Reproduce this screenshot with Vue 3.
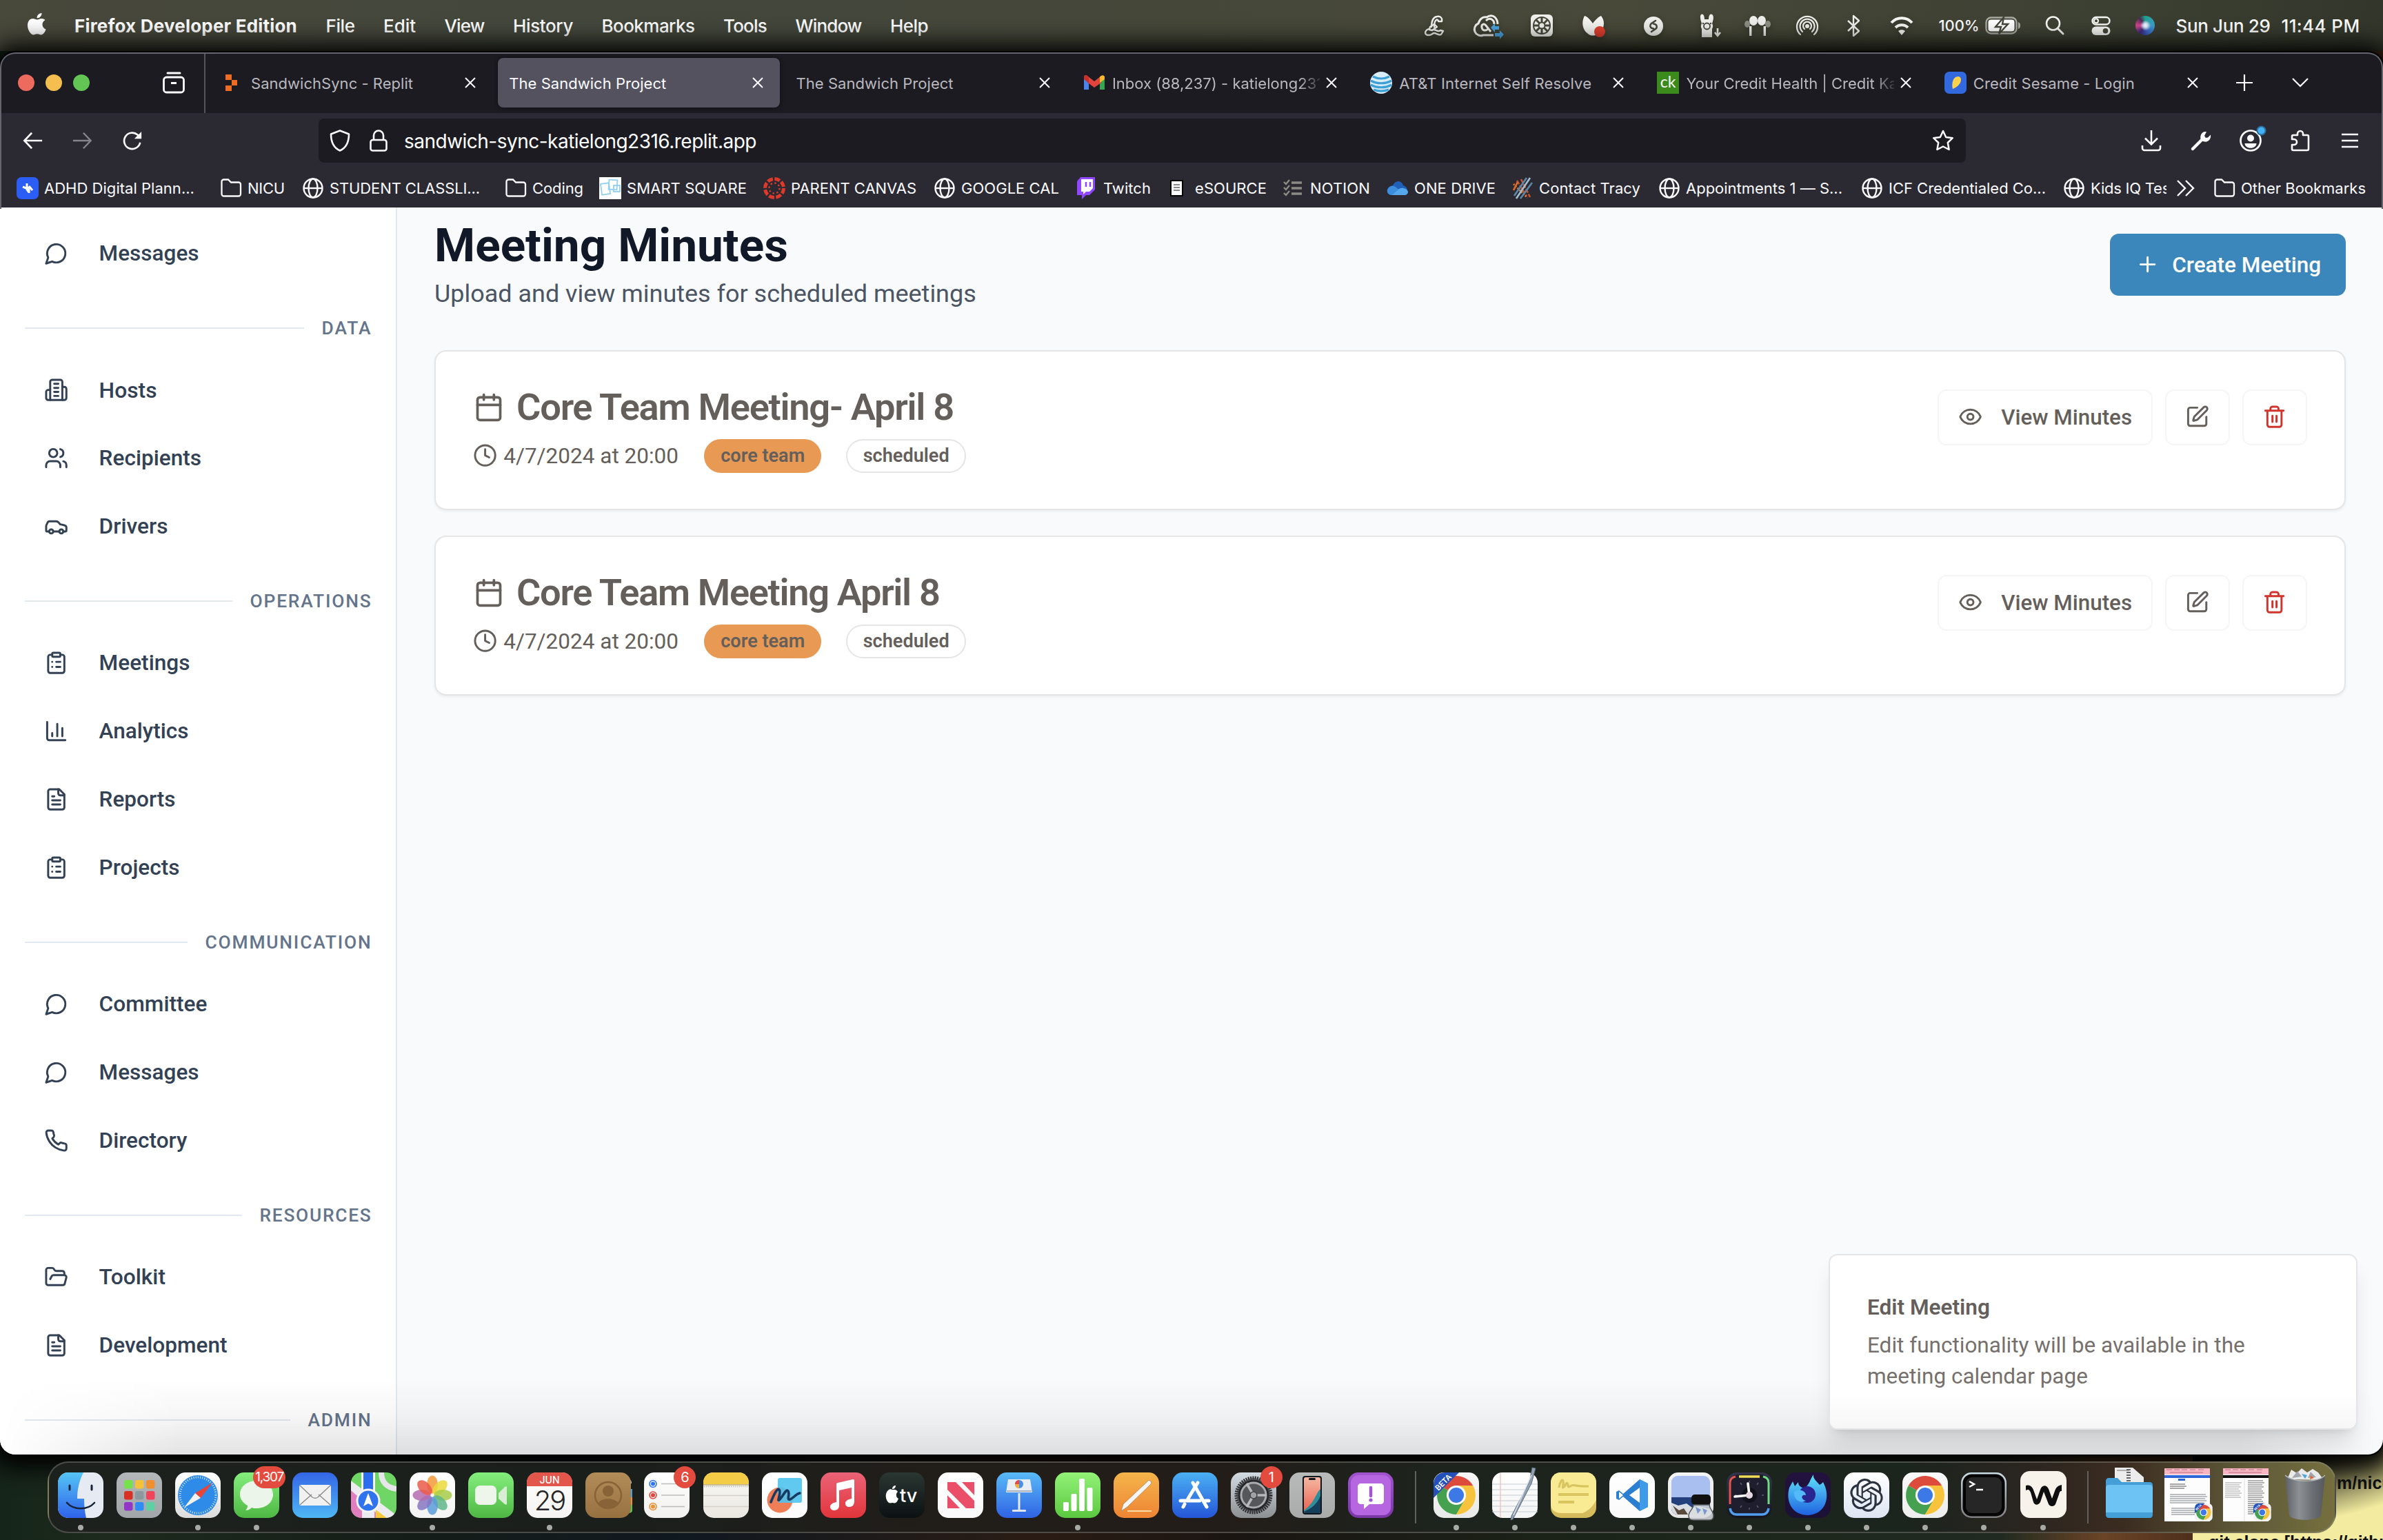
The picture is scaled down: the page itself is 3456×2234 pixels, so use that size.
<script setup>
// Fits a line of text to a known width: letter-spacing by default, font size with v-fit:size
const vFit = {
  mounted(el, binding) {
    const target = binding.value
    if (!target) return
    const range = document.createRange()
    range.selectNodeContents(el)
    const natural = range.getBoundingClientRect().width
    const cs = getComputedStyle(el)
    if (binding.arg === 'size') {
      el.style.fontSize = (parseFloat(cs.fontSize) * target) / natural + 'px'
    } else {
      const n = el.textContent.trim().length
      const base = parseFloat(cs.letterSpacing) || 0
      el.style.letterSpacing = base + (target - natural) / n + 'px'
    }
  },
}

/* ---------- menu bar ---------- */
const menus = [
  { t: 'File', w: 42 }, { t: 'Edit', w: 47 }, { t: 'View', w: 58 }, { t: 'History', w: 87 },
  { t: 'Bookmarks', w: 135 }, { t: 'Tools', w: 63 }, { t: 'Window', w: 96 }, { t: 'Help', w: 55 },
]
const status = [
  { gap: 0, art: '<g fill="none" stroke="#eeeeea" stroke-width="2.4" stroke-linejoin="round" stroke-linecap="round"><path d="M14 20c0-7 2-14 8-15 5-1 8 2 7 7h-5c0-2-2-3-3-2-3 2-3 7-3 10"/><path d="M12 20l6-4 4 4-7 5-4-1zM10 23c-7 3-6 9 0 9 5 0 5-3 8-3s6 4 10 2l3-5-4-1c-4 3-6-1-10-1"/></g>' },
  { gap: 42, art: '<g fill="none" stroke="#eeeeea" stroke-width="3"><path d="M26 32H11A9 9 0 0 1 4 15C6 8 11 5 16 6c4-3 9-3 12 0s4 6 4 10"/><path d="M22 27l-7-9c-3-4-7-1-6 3 1 5 6 5 9 2M15 11c6-6 12-1 12 5"/></g><path d="M22 21l6-6v4h6v5h-6v4zM41 31l-6-6v4h-7v5h7v4z" fill="#4aa3df"/>' },
  { gap: 42, art: '<rect x="2" y="2" width="32" height="32" rx="6" fill="#eeeeea"/><circle cx="18" cy="18" r="12" fill="none" stroke="#46473a" stroke-width="2"/><path d="M18 7v22M7 18h22M10 10l16 16M26 10L10 26" stroke="#46473a" stroke-width="3"/><circle cx="18" cy="18" r="4.5" fill="#eeeeea" stroke="#46473a" stroke-width="2"/>' },
  { gap: 40, art: '<path d="M4 4c4 1 8 5 12 11 4-6 9-10 12-11 4 5 5 11 3 17-6-2-13 4-11 11-3 1-8 1-11-2C1 25-1 13 4 4z" fill="#f3f3f0"/><circle cx="26" cy="27" r="8" fill="#e0402f"/>' },
  { gap: 50, art: '<circle cx="18" cy="19" r="14" fill="#eeeeea"/><path d="M21 11l-6 4c-3 2.500-2 6 1 7l2 .5M15 27l6-4c3-2.500 2-6-1-7l-2-.5" fill="none" stroke="#46473a" stroke-width="2.600" stroke-linecap="round"/>' },
  { gap: 45, art: '<path d="M6 2c3-2 5 2 5 7h6c0-5 2-9 5-7s2 8 0 13c2 3 1 6 0 8v12H7V23c-2-3-1-6 0-8-2-5-3-11-1-13z" fill="#eeeeea"/><circle cx="14.500" cy="19" r="4.500" fill="none" stroke="#46473a" stroke-width="1.800"/><circle cx="9" cy="15" r="1.200" fill="#46473a"/><circle cx="20" cy="15" r="1.200" fill="#46473a"/><path d="M30 22v10M26 28l4 5 4-5" fill="none" stroke="#eeeeea" stroke-width="2.600"/>' },
  { gap: 34, art: '<g fill="#eeeeea"><ellipse cx="12" cy="11" rx="6" ry="7"/><ellipse cx="24" cy="11" rx="6" ry="7"/><rect x="6" y="19" width="3.4" height="14"/><rect x="26.600" y="19" width="3.400" height="14"/></g><ellipse cx="3" cy="16" rx="4" ry="5" fill="#8c8d83"/><ellipse cx="33" cy="16" rx="4" ry="5" fill="#8c8d83"/>' },
  { gap: 36, art: '<g fill="none" stroke="#eeeeea" stroke-width="2.3" stroke-linecap="round"><path d="M8 31a15 15 0 1 1 20 0"/><path d="M11 27a10.500 10.500 0 1 1 14 0"/><path d="M14 23a6 6 0 1 1 8 0"/></g><circle cx="18" cy="19" r="3" fill="#eeeeea"/>' },
  { gap: 31, art: '<path d="M10 11l16 15-8 7V4l8 7-16 15" fill="none" stroke="#eeeeea" stroke-width="2.4" stroke-linejoin="round"/>' },
  { gap: 34, art: '<g fill="none" stroke="#f6f6f3" stroke-width="4"><path d="M3 14c8-9 22-9 30 0"/><path d="M9 21c5-5 13-5 18 0"/></g><path d="M13 26c3-2.500 7-2.500 10 0l-5 6z" fill="#f6f6f3"/>' },
]

/* ---------- tabs ---------- */
const fav = {
  replit: '<path d="M5 4h9v8H5zM14 12h8v8h-8zM5 20h9v8H5z" fill="#ee6c22"/>',
  gmail: '<path d="M1 7v19h7V14z" fill="#4a84ee"/><path d="M31 7v19h-7V14z" fill="#37a452"/><path d="M1 7c1-3 4-2 5-1l10 8 10-8v10L16 23 6 15.500z" fill="#e0443a"/><path d="M24 7.500l2-1.500c2-1.500 5-.5 5 2v3l-7 5z" fill="#f7bb2d"/><path d="M1 7c1-3 4-2 5-1l2 1.500v9L1 11z" fill="#c5302a"/>',
  att: '<circle cx="16" cy="16" r="16" fill="#d9edf8"/><g stroke="#3c9fd6" fill="none" stroke-width="3.200"><path d="M4 7c8 4 16 4 24 0"/><path d="M1 13c9 5 21 5 30 0"/><path d="M1 19c9 5 21 5 30 0"/><path d="M5 26c8 3 14 3 22 0"/></g>',
  ck: '<rect width="32" height="32" fill="#3a8a1c"/><text x="16" y="23" text-anchor="middle" font-family="Lato, sans-serif" font-size="23" fill="#fff">ck</text>',
  sesame: '<rect width="32" height="32" rx="7" fill="#3369de"/><path d="M12 25c-2-7 0-18 8-18 7 1 5 13-8 18z" fill="#fbd24b"/>',
}
const tabs = [
  { t: 'SandwichSync - Replit', w: 235, icon: 'replit' },
  { t: 'The Sandwich Project', w: 228, active: true },
  { t: 'The Sandwich Project', w: 228 },
  { t: 'Inbox (88,237) - katielong2316', w: 319, icon: 'gmail' },
  { t: 'AT&T Internet Self Resolve', w: 279, icon: 'att' },
  { t: 'Your Credit Health | Credit Karma', w: 347, icon: 'ck' },
  { t: 'Credit Sesame - Login', w: 234, icon: 'sesame' },
]

/* ---------- bookmarks ---------- */
const globe = '<g fill="none" stroke="#fbfbfe" stroke-width="2.400"><circle cx="16" cy="16" r="13.500"/><ellipse cx="16" cy="16" rx="6.500" ry="13.500"/><path d="M3 16h26"/></g>'
const folder = '<path d="M2.500 6.500a3 3 0 0 1 3-3H12l4 4h11a3 3 0 0 1 3 3v14a3 3 0 0 1-3 3H5.500a3 3 0 0 1-3-3z" fill="none" stroke="#fbfbfe" stroke-width="2.300"/>'
const marks = [
  { x: 24, t: 'ADHD Digital Plann...', w: 218, art: '<rect width="32" height="32" rx="7" fill="#2c5df5"/><path d="M9 14l5 2 3 5M15 9v5l3 4v5M18 13l5 6" fill="none" stroke="#fff" stroke-width="3"/>' },
  { x: 319, t: 'NICU', w: 54, art: folder },
  { x: 438, t: 'STUDENT CLASSLI...', w: 218, art: globe },
  { x: 732, t: 'Coding', w: 74, art: folder },
  { x: 869, t: 'SMART SQUARE', w: 174, art: '<rect width="32" height="32" fill="#fff"/><g fill="none" stroke="#8fd0f0" stroke-width="1.800"><rect x="3" y="9" width="12" height="16" transform="rotate(-8 9 17)"/><rect x="14" y="4" width="12" height="14" transform="rotate(4 20 11)"/><rect x="21" y="12" width="9" height="9"/></g>' },
  { x: 1107, t: 'PARENT CANVAS', w: 182, art: '<circle cx="16" cy="16" r="13.500" fill="none" stroke="#e0392b" stroke-width="5" stroke-dasharray="8 2.600"/><circle cx="16" cy="16" r="7.500" fill="none" stroke="#e0392b" stroke-width="2.400" stroke-dasharray="2.400 3.500"/>' },
  { x: 1354, t: 'GOOGLE CAL', w: 142, art: globe },
  { x: 1560, t: 'Twitch', w: 69, art: '<path d="M7 0h21v18l-8 8h-5l-6 6v-6H2V6z" fill="#9147ff"/><path d="M8 3h17v13l-5 5h-5l-4 4v-4H8z" fill="#fff"/><path d="M15 7v7M21 7v7" stroke="#9147ff" stroke-width="2.500"/>' },
  { x: 1693, t: 'eSOURCE', w: 104, art: '<rect x="4" y="4" width="19" height="24" fill="#000"/><rect x="6" y="6" width="15" height="20" fill="#fff"/><path d="M9 11h9M9 15h9M9 19h9" stroke="#888" stroke-width="2"/>' },
  { x: 1860, t: 'NOTION', w: 87, art: '<g stroke="#8c8b84" stroke-width="3.600" fill="none"><path d="M13 8h15M13 16h15M13 24h15"/><path d="M2 7l3 3 5-6M2 15l3 3 5-6M2 23l3 3 5-6" stroke-width="2.400"/></g>' },
  { x: 2011, t: 'ONE DRIVE', w: 118, art: '<path d="M9 12c3-8 13-8 15 0 8 2 8 14 0 14H8c-9 0-10-12 1-14z" fill="#2160b8"/><path d="M1 18c4-7 10-6 14-2l14 9c-2 1-4 1-5 1H8c-5 0-8-3-7-8z" fill="#3d8ddd"/><path d="M8 26l10-9c5-3 12 0 13 4 0 3-2 5-6 5z" fill="#55a8ec"/>' },
  { x: 2192, t: 'Contact Tracy', w: 147, art: '<g stroke-width="2.600"><path d="M8 5l14 23M14 3l13 26" stroke="#c8542e" stroke-dasharray="6 2"/><path d="M3 10l20 20" stroke="#e08233" stroke-dasharray="2 2"/><path d="M27 1L7 31" stroke="#a3bfd4"/><path d="M22 1L4 27M30 8L13 31" stroke="#5c87a8"/><path d="M3 19l6-12" stroke="#e06a2e"/></g>' },
  { x: 2405, t: 'Appointments 1 — S...', w: 227, art: globe },
  { x: 2699, t: 'ICF Credentialed Co...', w: 228, art: globe },
  { x: 2992, t: 'Kids IQ Test', w: 122, art: globe },
].map((m, i, all) => ({ ...m, slot: (all[i + 1]?.x ?? 3142) - m.x }))

/* ---------- app icons (24px grid) ---------- */
const I = {
  message: '<path d="M7.900 20A9 9 0 1 0 4 16.100L2 22Z"/>',
  building: '<path d="M6 22V4a2 2 0 0 1 2-2h8a2 2 0 0 1 2 2v18Z"/><path d="M6 12H4a2 2 0 0 0-2 2v6a2 2 0 0 0 2 2h2"/><path d="M18 9h2a2 2 0 0 1 2 2v9a2 2 0 0 1-2 2h-2"/><path d="M10 6h4M10 10h4M10 14h4M10 18h4"/>',
  users: '<path d="M16 21v-2a4 4 0 0 0-4-4H6a4 4 0 0 0-4 4v2"/><circle cx="9" cy="7" r="4"/><path d="M22 21v-2a4 4 0 0 0-3-3.870"/><path d="M16 3.130a4 4 0 0 1 0 7.750"/>',
  car: '<path d="M19 17h2c.6 0 1-.4 1-1v-3c0-.9-.7-1.700-1.500-1.900C18.700 10.600 16 10 16 10s-1.300-1.400-2.200-2.300c-.5-.4-1.100-.7-1.800-.7H5c-.6 0-1.100.4-1.400.9l-1.400 2.900A3.700 3.700 0 0 0 2 12v4c0 .6.4 1 1 1h2"/><circle cx="7" cy="17" r="2"/><path d="M9 17h6"/><circle cx="17" cy="17" r="2"/>',
  clipboard: '<rect x="8" y="2" width="8" height="4" rx="1"/><path d="M16 4h2a2 2 0 0 1 2 2v14a2 2 0 0 1-2 2H6a2 2 0 0 1-2-2V6a2 2 0 0 1 2-2h2"/><path d="M12 11h4M12 16h4M8 11h.01M8 16h.01"/>',
  chart: '<path d="M3 3v16a2 2 0 0 0 2 2h16"/><path d="M18 17V9M13 17V5M8 17v-3"/>',
  file: '<path d="M15 2H6a2 2 0 0 0-2 2v16a2 2 0 0 0 2 2h12a2 2 0 0 0 2-2V7Z"/><path d="M14 2v4a2 2 0 0 0 2 2h4"/><path d="M10 9H8M16 13H8M16 17H8"/>',
  phone: '<path d="M22 16.920v3a2 2 0 0 1-2.180 2 19.790 19.790 0 0 1-8.630-3.070 19.500 19.500 0 0 1-6-6 19.790 19.790 0 0 1-3.070-8.670A2 2 0 0 1 4.110 2h3a2 2 0 0 1 2 1.720 12.840 12.840 0 0 0 .7 2.810 2 2 0 0 1-.45 2.110L8.090 9.910a16 16 0 0 0 6 6l1.270-1.270a2 2 0 0 1 2.110-.45 12.840 12.840 0 0 0 2.810.7A2 2 0 0 1 22 16.920z"/>',
  folderOpen: '<path d="m6 14 1.500-2.900A2 2 0 0 1 9.240 10H20a2 2 0 0 1 1.940 2.500l-1.540 6a2 2 0 0 1-1.950 1.500H4a2 2 0 0 1-2-2V5a2 2 0 0 1 2-2h3.900a2 2 0 0 1 1.690.9l.81 1.200a2 2 0 0 0 1.670.9H18a2 2 0 0 1 2 2v2"/>',
  calendar: '<path d="M8 2v4M16 2v4"/><rect x="3" y="4" width="18" height="18" rx="2"/><path d="M3 10h18"/>',
  clock: '<circle cx="12" cy="12" r="10"/><path d="M12 6v6l4 2"/>',
  eye: '<path d="M2.062 12.348a1 1 0 0 1 0-.696 10.750 10.750 0 0 1 19.876 0 1 1 0 0 1 0 .696 10.750 10.750 0 0 1-19.876 0"/><circle cx="12" cy="12" r="3"/>',
  pen: '<path d="M12 3H5a2 2 0 0 0-2 2v14a2 2 0 0 0 2 2h14a2 2 0 0 0 2-2v-7"/><path d="M18.375 2.625a1 1 0 0 1 3 3l-9.013 9.014a2 2 0 0 1-.853.505l-2.873.84a.5.5 0 0 1-.62-.62l.84-2.873a2 2 0 0 1 .506-.852z"/>',
  trash: '<path d="M3 6h18M19 6v14c0 1-1 2-2 2H7c-1 0-2-1-2-2V6M8 6V4c0-1 1-2 2-2h4c1 0 2 1 2 2v2M10 11v6M14 11v6"/>',
  plus: '<path d="M5 12h14M12 5v14"/>',
}

const sections = [
  { items: [{ t: 'Messages', w: 145, icon: 'message' }] },
  { title: 'DATA', w: 73, items: [{ t: 'Hosts', w: 84, icon: 'building' }, { t: 'Recipients', w: 148.5, icon: 'users' }, { t: 'Drivers', w: 100, icon: 'car' }] },
  { title: 'OPERATIONS', w: 177, items: [{ t: 'Meetings', w: 132, icon: 'clipboard' }, { t: 'Analytics', w: 130, icon: 'chart' }, { t: 'Reports', w: 111, icon: 'file' }, { t: 'Projects', w: 117, icon: 'clipboard' }] },
  { title: 'COMMUNICATION', w: 242, items: [{ t: 'Committee', w: 157, icon: 'message' }, { t: 'Messages', w: 145, icon: 'message' }, { t: 'Directory', w: 128, icon: 'phone' }] },
  { title: 'RESOURCES', w: 163, items: [{ t: 'Toolkit', w: 96.5, icon: 'folderOpen' }, { t: 'Development', w: 186, icon: 'file' }] },
  { title: 'ADMIN', w: 93, items: [] },
]

const meetings = [
  { t: 'Core Team Meeting- April 8', w: 633 },
  { t: 'Core Team Meeting April 8', w: 613 },
]

/* ---------- dock ---------- */
const lg = (id, a, b) => `<linearGradient id="${id}" x1="0" y1="0" x2="0" y2="1"><stop offset="0" stop-color="${a}"/><stop offset="1" stop-color="${b}"/></linearGradient>`
const tile = (id, a, b) => `<defs>${lg('t-' + id, a, b)}</defs><rect width="66" height="66" rx="15" fill="url(#t-${id})"/>`
const chrome = (s = '') => `<g ${s}><circle cx="33" cy="33" r="28" fill="#fff"/><path d="M33 33L8.800 19A28 28 0 0 1 57.200 19z" fill="#dc4b3c"/><path d="M8.800 19A28 28 0 0 0 33 61L45.500 40z" fill="#45a04f"/><path d="M57.200 19A28 28 0 0 1 33 61L45 40V19z" fill="#f8c33c"/><path d="M33 19h24.200L45 40z" fill="#f8c33c"/><circle cx="33" cy="33" r="14" fill="#fff"/><circle cx="33" cy="33" r="11" fill="#3c78e6"/></g>`
const beta = '<path d="M17 0h20L0 37V17C0 7 7 0 17 0z" fill="#2450b8"/><text x="0" y="0" transform="translate(7 27) rotate(-45)" font-family="Inter, sans-serif" font-weight="600" font-size="11" fill="#fff">BETA</text>'
const petals = ['#f39a38', '#ead93a', '#a9cc4a', '#62b68a', '#5b9bd9', '#8677c2', '#b66bb0', '#ea5a4a']
  .map((c, i) => `<ellipse cx="33" cy="17.500" rx="8" ry="13" fill="${c}" opacity=".85" transform="rotate(${i * 45} 33 33)"/>`).join('')
const pads = ['#77e04d', '#f5c13a', '#ef8f30', '#d93025', '#8d979e', '#f0435c', '#9335c7', '#2f8cf7', '#5fcfa4']
  .map((c, i) => `<rect x="${11 + (i % 3) * 16}" y="${11 + Math.floor(i / 3) * 16}" width="12.500" height="12.500" rx="3" fill="${c}"/>`).join('')
const docWin = (bar, side) => `<rect y="-6" width="66" height="77" fill="#fdfdfd"/><rect y="-6" width="66" height="9" fill="#f7b4c2"/><path d="M3-4h8M14-4h8M25-4h8M37-4h8M49-4h8M8 0h48" stroke="#b9707f" stroke-width="1"/><rect y="4" width="66" height="4" fill="${bar}"/>${side}`
const ptext = (x, w, y0, y1, c = '#a5a8ad') => { let s = ''; for (let y = y0; y <= y1; y += 3) s += `<path d="M${x} ${y}h${w - (y % 5)}" stroke="${c}" stroke-width="1.300"/>`; return s }
const miniChrome = `<g transform="translate(44 45) scale(.39)"><rect width="66" height="66" rx="15" fill="#f3f3f3"/>${chrome()}${beta}</g>`
const knot = 'M22.2819 9.8211a5.9847 5.9847 0 0 0-.5157-4.9108 6.0462 6.0462 0 0 0-6.5098-2.9A6.0651 6.0651 0 0 0 4.9807 4.1818a5.9847 5.9847 0 0 0-3.9977 2.9 6.0462 6.0462 0 0 0 .7427 7.0966 5.98 5.98 0 0 0 .511 4.9107 6.051 6.051 0 0 0 6.5146 2.9001A5.9847 5.9847 0 0 0 13.2599 24a6.0557 6.0557 0 0 0 5.7718-4.2058 5.9894 5.9894 0 0 0 3.9977-2.9001 6.0557 6.0557 0 0 0-.7475-7.0729zm-9.022 12.6081a4.4755 4.4755 0 0 1-2.8764-1.0408l.1419-.0804 4.7783-2.7582a.7948.7948 0 0 0 .3927-.6813v-6.7369l2.02 1.1686a.071.071 0 0 1 .038.052v5.5826a4.504 4.504 0 0 1-4.4945 4.4944zm-9.6607-4.1254a4.4708 4.4708 0 0 1-.5346-3.0137l.142.0852 4.783 2.7582a.7712.7712 0 0 0 .7806 0l5.8428-3.3685v2.3324a.0804.0804 0 0 1-.0332.0615L9.74 19.9502a4.4992 4.4992 0 0 1-6.1408-1.6464zM2.3408 7.8956a4.485 4.485 0 0 1 2.3655-1.9728V11.6a.7664.7664 0 0 0 .3879.6765l5.8144 3.3543-2.0201 1.1685a.0757.0757 0 0 1-.071 0l-4.8303-2.7865A4.504 4.504 0 0 1 2.3408 7.872zm16.5963 3.8558L13.1038 8.364 15.1192 7.2a.0757.0757 0 0 1 .071 0l4.8303 2.7913a4.4944 4.4944 0 0 1-.6765 8.1042v-5.6772a.79.79 0 0 0-.407-.667zm2.0107-3.0231l-.142-.0852-4.7735-2.7818a.7759.7759 0 0 0-.7854 0L9.409 9.2297V6.8974a.0662.0662 0 0 1 .0284-.0615l4.8303-2.7866a4.4992 4.4992 0 0 1 6.6802 4.66zM8.3065 12.863l-2.02-1.1638a.0804.0804 0 0 1-.038-.0567V6.0742a4.4992 4.4992 0 0 1 7.3757-3.4537l-.142.0805L8.704 5.459a.7948.7948 0 0 0-.3927.6813zm1.0976-2.3654l2.602-1.4998 2.6069 1.4998v2.9994l-2.5974 1.4997-2.6067-1.4997Z'

const appsA = [
  { dot: 1, art: `<defs>${lg('fa', '#55c4f5', '#2f62ea')}<clipPath id="fc"><rect width="66" height="66" rx="15"/></clipPath></defs><g clip-path="url(#fc)"><rect width="66" height="66" fill="#e6ebf3"/><path d="M37 0c-6 12-9 24-9 38h10c0 10 1 20 3 28H0V0z" fill="url(#fa)"/></g><path d="M17 19v6M49 19v6" stroke="#16233a" stroke-width="3" stroke-linecap="round"/><path d="M13 44c10 11 30 11 40 0" fill="none" stroke="#16233a" stroke-width="2.600" stroke-linecap="round"/>` },
  { art: tile('lp', '#b4b7ba', '#a3a6a9') + pads },
  { dot: 1, art: tile('sf', '#ffffff', '#dcdcdc') + `<circle cx="33" cy="33" r="29" fill="#2f8be8"/><circle cx="33" cy="33" r="26" fill="none" stroke="#d4e9fb" stroke-width="3" stroke-dasharray="1 2.200"/><path d="M54 15L37 37l-8-7z" fill="#e8453a"/><path d="M13 51l16-21 8 7z" fill="#f2f2f2"/>` },
  { dot: 1, badge: '1,307', art: tile('ms', '#84ee7d', '#4fb844') + '<path d="M33 12c14 0 24 9 24 20S47 52 33 52c-3 0-5 0-7-1-2 2-5 4-9 4 3-3 3-5 3-7C13 44 9 38 9 32c0-11 10-20 24-20z" fill="#ebf5e9"/>' },
  { art: tile('ml', '#3466e6', '#4fb6f4') + '<rect x="10" y="18" width="46" height="30" rx="3" fill="#f1f1f1"/><path d="M11 47l17-15M55 47L38 32M11 19l18 17c3 2 5 2 8 0l18-17" fill="none" stroke="#8b8b8b" stroke-width="1.400"/>' },
  { art: '<defs><clipPath id="mc"><rect width="66" height="66" rx="15"/></clipPath></defs><g clip-path="url(#mc)"><rect width="66" height="66" fill="#6fd564"/><path d="M0 20l46 46H0z" fill="#e07fc0"/><path d="M0 12l66 50v4H45L0 26z" fill="#ececf0"/><path d="M16 40h18v26H16z" fill="#ececf0"/><path d="M36 54l16 12H36z" fill="#f6c83a"/><path d="M18 0h14v30H18z" fill="#2b6df0"/><path d="M15 0h3v30h-3zM32 0h3v30h-3z" fill="#f5f5f5"/><path d="M44 0c0 14 8 22 22 24" fill="none" stroke="#e5e5ea" stroke-width="8"/></g><circle cx="25" cy="41" r="16" fill="#2f73ee" stroke="#f4f4f4" stroke-width="3"/><path d="M25 30l7 19-7-4-7 4z" fill="#fff"/>' },
  { dot: 1, art: tile('ph', '#ffffff', '#f3f3f3') + petals },
  { art: tile('ft', '#84ee7d', '#4fb844') + '<rect x="10" y="19" width="31" height="28" rx="7" fill="#eef6ec"/><path d="M44 30l9-9c2-1 3-1 3 1v23c0 2-1 2-3 1l-9-8z" fill="#d9ecd5"/>' },
  { dot: 1, art: tile('cl', '#ffffff', '#f4f3f1') + '<path d="M15 0h36c9 0 15 6 15 15v5H0v-5C0 6 6 0 15 0z" fill="#e2564b"/><text x="33" y="16" text-anchor="middle" font-family="Inter, sans-serif" font-weight="500" font-size="14" fill="#fff">JUN</text><text x="33" y="55" text-anchor="middle" font-family="Inter, sans-serif" font-weight="300" font-size="40" letter-spacing="-2" fill="#262626">29</text>' },
  { art: '<path d="M60 9c5 0 7 3 7 7h-7z" fill="#c9ccd0"/><path d="M62 24h6v12h-6z" fill="#4aa0e6"/><path d="M62 36h6v11h-6z" fill="#ee8f33"/><path d="M62 47h6v8c0 3-3 4-6 4z" fill="#5cc256"/>' + tile('ct', '#b28c58', '#987141') + '<circle cx="33" cy="33" r="19" fill="none" stroke="#876337" stroke-width="2.500"/><circle cx="33" cy="27" r="8" fill="#876337"/><path d="M18 45c5-9 25-9 30 0-7 9-23 9-30 0z" fill="#876337"/>' },
  { badge: '6', art: tile('rm', '#ffffff', '#f1f0ee') + '<g fill="none" stroke-width="1.600"><circle cx="13" cy="16.500" r="5" stroke="#2f75ef"/><circle cx="13" cy="33" r="5" stroke="#e0483d"/><circle cx="13" cy="49.500" r="5" stroke="#ea9436"/></g><circle cx="13" cy="16.500" r="3" fill="#2f75ef"/><circle cx="13" cy="33" r="3" fill="#e0483d"/><circle cx="13" cy="49.500" r="3" fill="#ea9436"/><path d="M25 16.500h34M25 33h34M25 49.500h34" stroke="#bdbdbd" stroke-width="1.400"/>' },
  { art: tile('nt', '#fbfaf6', '#e9e7e0') + '<path d="M15 0h36c9 0 15 6 15 15v2H0v-2C0 6 6 0 15 0z" fill="#f5cc46"/><path d="M0 18h66" stroke="#b9a877" stroke-width="1.500"/><path d="M1 20.500h64" stroke="#bbb" stroke-width="1.500" stroke-dasharray="1.500 1.500"/><path d="M0 33.500h66M0 49.500h66" stroke="#d3d1ca" stroke-width="1.400"/>' },
  { art: tile('ff', '#ffffff', '#fbfbfb') + '<circle cx="26" cy="40" r="18.500" fill="#ef7d55"/><rect x="23" y="8" width="35" height="36" rx="3" fill="#4fc3ee" opacity=".9"/><path d="M13 43c4-10 9-21 12-18 4 4-5 20 1 14 5-5 9-16 12-12 3 5-3 14 3 12 4-1 8-8 14-9" fill="none" stroke="#173a63" stroke-width="3.600" stroke-linecap="round"/>' },
  { art: tile('mu', '#ea6377', '#e2353b') + '<path d="M23 17c0-1 1-2 2-2l22-5c1 0 2 0 2 2v30c0 5-3 8-7 8s-6-2-6-5c0-4 4-6 9-7V22l-18 4v22c0 5-4 7-7 7s-6-2-6-5c0-4 4-6 9-7z" fill="#fff"/>' },
  { art: tile('tv', '#2a3733', '#0c1012') + '<path d="M19 25c-2-1-4-1-6 1-5 4-4 14 1 18 2 1 3 0 5 0s4 1 5 0c2-1 3-4 4-6-4-2-4-8-1-10-2-4-6-3-8-3zM19 24c0-3 2-5 5-5 0 3-2 5-5 5z" fill="#fff"/><text x="30" y="43" font-family="Inter, sans-serif" font-weight="500" font-size="27" fill="#fff">tv</text>' },
  { art: tile('nw', '#ffffff', '#fafafa') + '<g fill="#ea4e68"><path d="M35 14h18v19z"/><path d="M14 33v19h18z"/><path d="M14 14h12l27 27v11H41L14 25z"/></g>' },
  { art: tile('kn', '#59baf8', '#2f63e4') + '<path d="M17 10h32l3 19H14z" fill="#e9eef4"/><path d="M15 27h36" stroke="#a9b2bd" stroke-width="2"/><circle cx="33" cy="17" r="6" fill="#4b8ee8"/><path d="M33 17v-6a6 6 0 0 0-6 6z" fill="#e24d42"/><path d="M33 17h-6a6 6 0 0 0 6 6z" fill="#f1b13c"/><rect x="31.500" y="30" width="3" height="24" fill="#e5ebf2"/><rect x="23" y="54" width="20" height="3" rx="1" fill="#dfe6ee"/>' },
  { dot: 1, art: tile('nu', '#92f277', '#5bc740') + '<g fill="#fff"><rect x="12" y="43" width="8" height="13" rx="2"/><rect x="23.500" y="31" width="8" height="25" rx="2"/><rect x="35" y="9" width="8" height="47" rx="2"/><rect x="46.500" y="22" width="8" height="34" rx="2"/></g>' },
  { art: tile('pg', '#f5b54a', '#ee8434') + '<path d="M53 12c2 1 2 3 1 5L20 50l-9 6 3-10L48 14c2-2 3-3 5-2z" fill="#f5f5f5" stroke="#b3814a" stroke-width=".8"/><path d="M20 56h35" stroke="#fbd9a6" stroke-width="2.200"/>' },
  { art: tile('as', '#4bb0f3', '#2556d8') + '<g stroke="#fff" stroke-width="5" stroke-linecap="round" fill="none"><path d="M37 15L23 38M16 50l2-4M30 15l20 35M12 41h28M48 41h5"/></g>' },
  { badge: '1', art: tile('st', '#d2dbe2', '#8d9093') + '<circle cx="33" cy="33" r="25" fill="#77797c" stroke="#2f3033" stroke-width="5" stroke-dasharray="2 1.300"/><circle cx="33" cy="33" r="20.500" fill="#55575a" stroke="#25272a" stroke-width="4"/><circle cx="33" cy="33" r="18" fill="none" stroke="#a9abad" stroke-width="3"/><path d="M33 33h19M33 33l-10 17M33 33l-10-17" stroke="#b6b8ba" stroke-width="3.500"/><circle cx="33" cy="33" r="5" fill="#9fa1a4" stroke="#444" stroke-width="1.500"/>' },
  { art: tile('ip', '#b9bbba', '#a9abaa') + '<defs>' + lg('ipw', '#f6b7a2', '#e8604f') + '</defs><rect x="19" y="5" width="28" height="56" rx="4" fill="#11161c"/><rect x="21" y="7" width="24" height="52" rx="2.500" fill="url(#ipw)"/><path d="M45 24c-7 6-8 20-24 31v2a2 2 0 0 0 2 2h20a2 2 0 0 0 2-2z" fill="#2d8f9c"/><path d="M45 34c-5 12-13 18-24 23 0 1 1 2 2 2h20c1 0 2-1 2-2z" fill="#163f5b"/><rect x="28" y="8" width="10" height="3" rx="1.500" fill="#11161c"/>' },
  { art: tile('fb', '#a154cf', '#7b37a6') + '<rect x="4" y="4" width="58" height="58" rx="11" fill="#b566e0"/><path d="M19 16h28c3 0 5 2 5 5v20c0 3-2 5-5 5H31l-8 7v-7h-4c-3 0-5-2-5-5V21c0-3 2-5 5-5z" fill="#fff"/><path d="M33 22v12" stroke="#a255d2" stroke-width="4.500" stroke-linecap="round"/><circle cx="33" cy="40" r="2.600" fill="#a255d2"/>' },
]
const appsB = [
  { dot: 1, art: tile('cb', '#f6f6f6', '#e9e9e9') + chrome() + beta },
  { dot: 1, art: tile('te', '#ffffff', '#f4f4f4') + '<path d="M0 17h66M0 25h66M0 33h66M0 41h66M0 49h66M0 57h66" stroke="#c6cbd0" stroke-width="1.200"/><path d="M12 0v66" stroke="#f0b9b9" stroke-width="1.200"/><path d="M58-7l5 1-6 22-27 52-3 1 1-6L54 14z" fill="#8fa1b3" stroke="#5b6b7b" stroke-width="1"/><path d="M57 4L31 62" stroke="#d6e0ea" stroke-width="1.600"/>' },
  { dot: 1, art: tile('sn', '#e4cf72', '#d3b95a') + '<path d="M15 0h36c9 0 15 6 15 15v25c-5 9-10 15-20 19H15C6 59 0 54 0 45V15C0 6 6 0 15 0z" fill="#f8eb93"/><path d="M12 22c1-8 5-14 6-9 1 6-3 13 2 7 3-5 4-7 5-1 0 3 2 2 5 0s8 2 25 1" fill="none" stroke="#d9c560" stroke-width="3.200"/><path d="M11 32h44M11 43h23" stroke="#d9c560" stroke-width="4"/>' },
  { dot: 1, art: tile('vs', '#ffffff', '#fafafa') + '<path d="M44 10l12 6v34l-12 6-24-21-6 5-4-2V28l4-2 6 5z" fill="#2b7fd0"/><path d="M44 22v22L29 33z" fill="#fff"/><path d="M44 10l12 6v34l-12 6z" fill="#3f9ae8"/><path d="M14 28l6 5-6 5z" fill="#fff"/>' },
  { dot: 1, art: tile('pv', '#f4f4f4', '#e5e5e5') + '<rect x="5" y="5" width="56" height="56" rx="9" fill="#a9bff0"/><path d="M5 36h56v16c0 6-4 9-9 9H14c-6 0-9-4-9-9z" fill="#23407c"/><path d="M5 44l10 4 12-3 8 6 10-2 16 4c0 5-4 8-9 8H14c-6 0-9-4-9-9z" fill="#d8dde4"/><path d="M7 48l9 7 7-3 6 9H14z" fill="#5a4a3c"/><rect x="34" y="32" width="28" height="15" rx="5" fill="#111"/><path d="M37 47h23c0 6 6 9 6 16 0 4-2 6-6 6H37c-5 0-7-2-7-6 0-7 7-10 7-16z" fill="#d9dde0" fill-opacity=".85" stroke="#55595c" stroke-width="1.500"/><path d="M40 50l8 4-5 6zM50 52l7 3-4 7z" fill="#7a98c8"/>' },
  { dot: 1, art: tile('ck', '#34344c', '#15151f') + '<rect x="3" y="3" width="60" height="60" rx="13" fill="#1e1e2e"/><path d="M33 12v3M33 51v3M12 33h3M51 33h3M20 15l2 3M46 15l-2 3M20 51l2-3M46 51l-2-3" stroke="#5a5a7a" stroke-width="1.400"/><path d="M18 6h30" stroke="#f1dc58" stroke-width="3.500"/><path d="M5 46V15c0-5 3-8 8-9" fill="none" stroke="#e2554c" stroke-width="3"/><path d="M61 46V15c0-5-3-8-8-9" fill="none" stroke="#70dc82" stroke-width="3"/><path d="M5 52c1 6 4 9 9 9h38c5 0 8-3 9-9" fill="none" stroke="#529ff2" stroke-width="3.500"/><circle cx="33" cy="33" r="11" fill="#11111b"/><path d="M33 33l-2-17M33 33l-21 2" stroke="#fff" stroke-width="3.600" stroke-linecap="round"/><circle cx="33" cy="33" r="5" fill="#e6d8e2"/>' },
  { dot: 1, art: tile('fx', '#23123f', '#1b1035') + '<defs>' + lg('fxf', '#5fe3fb', '#1f62e0') + '</defs><path d="M41 3c-1 6 4 9 9 15 3-2 4-3 5-4 12 22 3 47-22 48C11 62 0 43 6 22l5-9 3 7 5-6c0 5 3 7 8 9 8-4 9-13 14-20z" fill="url(#fxf)"/><circle cx="32" cy="32" r="12" fill="#2a2490"/><path d="M13 28c9-6 17 0 17 5-8-2-7 7 0 8-10 5-18-3-17-13z" fill="#53b9f8"/>' },
  { dot: 1, art: tile('gp', '#ffffff', '#dde5f2') + `<path d="${knot}" fill="#2b3340" transform="translate(9 9) scale(2)"/>` },
  { dot: 1, art: tile('ch', '#fafafa', '#ededed') + chrome() },
  { dot: 1, art: tile('tm', '#c9dde6', '#7c7c7e') + '<rect x="2.500" y="2.500" width="61" height="61" rx="13" fill="#050505"/><rect x="7" y="7" width="52" height="52" rx="9" fill="#262626"/><path d="M12 13l7 4-7 4" fill="none" stroke="#fff" stroke-width="2.500"/><path d="M22 25h10" stroke="#fff" stroke-width="2.500"/>' },
  { dot: 1, art: '<rect x="0" y="-2" width="67" height="68" rx="14" fill="#f7f3ea"/><path d="M8 19c6-2 10 2 12 9l4 11 5-14c2-7 9-8 12-1l5 14 4-11c2-6 5-8 10-9v9c-3 0-3 2-4 5l-5 14c-2 4-8 4-10 0l-7-18-5 15c-3 5-8 5-10 0L15 29c-2-4-3-5-7-3z" fill="#0f0f0f"/>' },
]
const appsC = [
  { art: '<path d="M13-7h26l16 14v22H13z" fill="#ececec"/><path d="M16-3h18" stroke="#999" stroke-width="1.500"/><path d="M33-5v28" stroke="#666" stroke-width="6" stroke-dasharray="2 2"/><path d="M0 12c0-2 2-4 4-4h13l6 6h41c2 0 4 2 4 4v44c0 2-2 4-4 4H4c-2 0-4-2-4-4z" fill="#459fd6"/><path d="M0 22c0-2 2-4 4-4h60c2 0 4 2 4 4v36H0z" fill="#6ec3f5"/>' },
  { art: docWin('#2d66d8', '<rect x="20" y="9" width="10" height="3" fill="#2d66d8"/>' + ptext(8, 24, 17, 24, '#777') + ptext(8, 54, 32, 46) + ptext(10, 38, 52, 62)) + miniChrome },
  { art: docWin('#111111', ptext(3, 24, 15, 36, '#b5b5b5') + ptext(36, 24, 12, 60, '#888') + '<path d="M31 9v62" stroke="#ddd"/>') + miniChrome },
  { art: '<defs><linearGradient id="tr"><stop offset="0" stop-color="#5d6064"/><stop offset=".35" stop-color="#8d9094"/><stop offset=".7" stop-color="#6a6d71"/><stop offset="1" stop-color="#55585c"/></linearGradient></defs><path d="M8 10L14-4l8 5 7-7 8 6 8-5 8 5 8 11z" fill="#e9eaec"/><path d="M15 8l8-10 6 8zM38 8l4-9 8 8z" fill="#a3a7ad"/><path d="M29 2l8 2-3 5z" fill="#4ba2dc"/><path d="M42 4l5 4-6 2z" fill="#d96a3c"/><path d="M5 4c12 11 48 11 58 0l-6 58c-2 9-44 9-46 0z" fill="url(#tr)"/><path d="M5 4c12 11 48 11 58 0" fill="none" stroke="#b2b5b8" stroke-width="1.500"/>' },
]
</script>

<template>
  <div class="desktop">
    <div class="note"><span class="n1">m/nicu</span><span class="n2">git clone [https://githu</span></div>

    <header class="menubar">
      <svg class="apple" viewBox="0 0 28 32"><path d="M20 8c-3 0-4 1.500-6 1.500S10 8 7.500 8C3 8 0 12 0 18c0 7 5 13.500 8.500 13.500 2 0 3-1.200 5.500-1.200s3.300 1.200 5.500 1.200c3 0 6-4 7-8-3-1.200-5-3.500-5-7 0-3 1.500-5 4-6.500C24 8.500 22 8 20 8zM13.500 7.200C13.500 3 17 0 20.500 0c.3 4-3 7.400-7 7.200z" fill="#fff" /></svg>
      <b class="appname"><span v-fit="323">Firefox Developer Edition</span></b>
      <nav class="menus"><span v-for="m in menus" :key="m.t" class="menu" :style="{ width: m.w + 'px' }"><span v-fit="m.w">{{ m.t }}</span></span></nav>
      <div class="status">
        <svg v-for="(s, i) in status" :key="i" class="sicon" viewBox="0 0 36 36" :style="{ marginLeft: s.gap + 'px' }" v-html="s.art" />
        <span class="pct"><span v-fit="59">100%</span></span>
        <svg class="battery" viewBox="0 0 52 26"><rect x="1.500" y="1.500" width="44" height="23" rx="7" fill="none" stroke="#a9aaa2" stroke-width="2.400" /><rect x="4.500" y="4.500" width="38" height="17" rx="4" fill="#fff" /><path d="M48 8c4 1 4 9 0 10z" fill="#a9aaa2" /><path d="M27 1L15 15h8l-3 10 13-14h-8z" fill="#fff" stroke="#46473a" stroke-width="2.400" /></svg>
        <svg class="search" viewBox="0 0 30 30"><circle cx="12.500" cy="12" r="9.500" fill="none" stroke="#f6f6f3" stroke-width="2.600" /><path d="M19 19l8 8" stroke="#f6f6f3" stroke-width="3" stroke-linecap="round" /></svg>
        <svg class="cc" viewBox="0 0 28 28"><rect x="1.500" y="2" width="25" height="10.500" rx="5.200" fill="none" stroke="#f6f6f3" stroke-width="2.400" /><circle cx="7" cy="7.200" r="3" fill="none" stroke="#f6f6f3" stroke-width="2" /><rect x="0.500" y="15.500" width="27" height="12.500" rx="6.200" fill="#f6f6f3" /><circle cx="20.500" cy="21.800" r="3.800" fill="#46473a" /></svg>
        <span class="siri" />
        <span class="date"><span v-fit="137">Sun Jun 29</span></span>
        <span class="time"><span v-fit="114">11:44 PM</span></span>
      </div>
    </header>

    <section class="window">
      <div class="tabbar">
        <div class="lights"><i class="r" /><i class="y" /><i class="g" /></div>
        <svg class="recent" viewBox="0 0 32 32"><path d="M7 2h18" stroke="#fbfbfe" stroke-width="3" stroke-linecap="round" /><rect x="1.500" y="8" width="29" height="22" rx="4" fill="none" stroke="#fbfbfe" stroke-width="2.800" /><path d="M12 16.500h8" stroke="#fbfbfe" stroke-width="3" /></svg>
        <div class="tabs">
          <div v-for="(t, i) in tabs" :key="i" class="tab" :class="{ active: t.active }">
            <svg v-if="t.icon" class="fav" viewBox="0 0 32 32" v-html="fav[t.icon]" />
            <div class="ttl" :class="{ fade: t.w > 300 }"><span v-fit="t.w">{{ t.t }}</span></div>
            <svg class="close" viewBox="0 0 16 16"><path d="M1 1l14 14M15 1L1 15" stroke="#fbfbfe" stroke-width="2" /></svg>
          </div>
        </div>
        <svg class="plus" viewBox="0 0 24 24"><path d="M12 0v24M0 12h24" stroke="#fbfbfe" stroke-width="2.200" /></svg>
        <svg class="chev" viewBox="0 0 24 14"><path d="M1 1l11 11L23 1" fill="none" stroke="#fbfbfe" stroke-width="2.200" /></svg>
      </div>

      <div class="toolbar">
        <svg class="nb back" viewBox="0 0 32 32"><path d="M30 16H3M14 4L2.500 16 14 28" fill="none" stroke="#fbfbfe" stroke-width="2.800" /></svg>
        <svg class="nb fwd" viewBox="0 0 32 32"><path d="M2 16h27M18 4l11.500 12L18 28" fill="none" stroke="#85848c" stroke-width="2.600" /></svg>
        <svg class="nb reload" viewBox="0 0 32 32"><path d="M28 19a12.500 12.500 0 1 1-4-12l4 4" fill="none" stroke="#fbfbfe" stroke-width="2.800" /><path d="M30 2v11H19z" fill="#fbfbfe" /></svg>
        <div class="url">
          <svg class="shield" viewBox="0 0 30 32"><path d="M15 1.500l13 5c0 12-4 20-13 24C6 26.500 2 18.500 2 6.500z" fill="none" stroke="#fbfbfe" stroke-width="2.600" stroke-linejoin="round" /></svg>
          <svg class="lock" viewBox="0 0 26 32"><rect x="1.500" y="15" width="23" height="15.500" rx="3" fill="none" stroke="#fbfbfe" stroke-width="2.600" /><path d="M6 15V8.500a7 7 0 0 1 14 0V15" fill="none" stroke="#fbfbfe" stroke-width="2.600" /></svg>
          <span class="addr"><span v-fit="511">sandwich-sync-katielong2316.replit.app</span></span>
          <svg class="star" viewBox="0 0 32 32"><path d="M16 2l4.200 9 9.600 1.200-7 6.800 1.800 10L16 24.500 7.400 29l1.800-10-7-6.800L11.800 11z" fill="none" stroke="#fbfbfe" stroke-width="2.500" stroke-linejoin="round" /></svg>
        </div>
        <div class="tools">
          <svg viewBox="0 0 32 32"><path d="M16 1v20M7 12.500l9 9 9-9M3 23v4a3 3 0 0 0 3 3h20a3 3 0 0 0 3-3v-4" fill="none" stroke="#fbfbfe" stroke-width="2.600" /></svg>
          <svg viewBox="0 0 32 32"><path d="M4 28L19 13" stroke="#fbfbfe" stroke-width="4.500" stroke-linecap="round" /><path d="M24 3l-3 6 2 3 3-.5 4-4c1 6-3 11-9 10-5-1-7-5-5-10 1-3 4-5 8-4.500z" fill="#fbfbfe" /></svg>
          <svg viewBox="0 0 32 32"><circle cx="16" cy="16" r="14.500" fill="none" stroke="#fbfbfe" stroke-width="2.700" /><circle cx="16" cy="12.500" r="5" fill="#fbfbfe" /><path d="M7.500 20h17c0 9-17 9-17 0z" fill="#fbfbfe" /><circle cx="31.500" cy="1.500" r="7" fill="#2d6f9f" /><circle cx="31.500" cy="1.500" r="5" fill="#44b0f5" /></svg>
          <svg viewBox="0 0 32 32"><path d="M4 14V10a2 2 0 0 1 2-2h6V6a4 4 0 0 1 8 0v2h6a2 2 0 0 1 2 2v18a2 2 0 0 1-2 2H6a2 2 0 0 1-2-2v-6h3a4 4 0 0 0 0-8z" fill="none" stroke="#fbfbfe" stroke-width="2.600" stroke-linejoin="round" /></svg>
          <svg viewBox="0 0 32 32"><path d="M4 7h24M4 16h24M4 25h24" stroke="#fbfbfe" stroke-width="2.600" /></svg>
        </div>
      </div>

      <div class="bookmarks">
        <div v-for="m in marks" :key="m.x" class="mark" :style="{ width: m.slot + 'px' }">
          <svg viewBox="0 0 32 32" v-html="m.art" /><span v-fit="m.w">{{ m.t }}</span>
        </div>
        <svg class="more" viewBox="0 0 28 24"><path d="M2 1l11 11L2 23M14 1l11 11-11 11" fill="none" stroke="#fbfbfe" stroke-width="2.400" /></svg>
        <div class="mark other"><svg viewBox="0 0 32 32" v-html="folder" /><span v-fit="181">Other Bookmarks</span></div>
      </div>

      <div class="page">
        <aside class="sidebar">
          <template v-for="(s, si) in sections" :key="si">
            <div v-if="s.title" class="sec"><hr /><span class="sect" :style="{ width: s.w + 'px' }"><span v-fit="s.w">{{ s.title }}</span></span></div>
            <div v-for="n in s.items" :key="n.t" class="row">
              <svg class="ic" viewBox="0 0 24 24" v-html="I[n.icon]" /><span v-fit:size="n.w">{{ n.t }}</span>
            </div>
          </template>
        </aside>

        <main class="main">
          <div class="head">
            <div>
              <h1><span v-fit:size="513">Meeting Minutes</span></h1>
              <p><span v-fit:size="786">Upload and view minutes for scheduled meetings</span></p>
            </div>
            <button class="create"><svg class="ic" viewBox="0 0 24 24" v-html="I.plus" /><span v-fit:size="216">Create Meeting</span></button>
          </div>

          <article v-for="m in meetings" :key="m.t" class="card">
            <div>
              <div class="title"><svg class="ic cal" viewBox="0 0 24 24" v-html="I.calendar" /><span v-fit:size="m.w">{{ m.t }}</span></div>
              <div class="meta">
                <svg class="ic" viewBox="0 0 24 24" v-html="I.clock" />
                <span class="when"><span v-fit:size="254">4/7/2024 at 20:00</span></span>
                <span class="pill team"><span v-fit:size="122">core team</span></span>
                <span class="pill"><span v-fit:size="125">scheduled</span></span>
              </div>
            </div>
            <div class="acts">
              <button class="btn view"><svg class="ic" viewBox="0 0 24 24" v-html="I.eye" /><span v-fit:size="190">View Minutes</span></button>
              <button class="btn"><svg class="ic" viewBox="0 0 24 24" v-html="I.pen" /></button>
              <button class="btn del"><svg class="ic" viewBox="0 0 24 24" v-html="I.trash" /></button>
            </div>
          </article>
        </main>

        <div class="shade" />
        <div class="toast">
          <strong><span v-fit:size="178">Edit Meeting</span></strong>
          <p><span v-fit:size="548">Edit functionality will be available in the</span></p>
          <p><span v-fit:size="320">meeting calendar page</span></p>
          <div class="tshade" />
        </div>
      </div>
    </section>

    <footer class="dock">
      <div class="group">
        <div v-for="(a, i) in appsA" :key="i" class="app"><svg viewBox="0 0 66 66" v-html="a.art" /><b v-if="a.badge" class="badge" :class="{ wide: a.badge.length > 1 }">{{ a.badge }}</b><i v-if="a.dot" /></div>
      </div>
      <hr />
      <div class="group">
        <div v-for="(a, i) in appsB" :key="i" class="app"><svg viewBox="0 0 66 66" v-html="a.art" /><i v-if="a.dot" /></div>
      </div>
      <hr />
      <div class="group">
        <div v-for="(a, i) in appsC" :key="i" class="app"><svg viewBox="0 0 66 66" v-html="a.art" /></div>
      </div>
    </footer>
  </div>
</template>

<style>
html, body { margin: 0; overflow: hidden; background: #000; }
</style>

<style scoped>
.desktop { position: relative; width: 3456px; height: 2234px; overflow: hidden; display: flex; flex-direction: column; font-family: Inter, "Liberation Sans", sans-serif; color: #fff;
  background: linear-gradient(90deg, #16251a 0, #1d2a1d 160px, #141d18 600px, #101820 1000px, #2a1c14 1500px, #1a1512 1800px, #1b2419 2300px, #202a20 2900px, #6b4426 3050px, #4e2f1c 3180px); }
.desktop > * { position: relative; }
svg { display: block; flex: none; overflow: visible; }
span { white-space: nowrap; }
button { font: inherit; background: none; border: 0; padding: 0; margin: 0; }
p, h1 { margin: 0; }
hr { border: 0; margin: 0; }

.desktop > .note { position: absolute; left: 3180px; top: 2085px; width: 276px; height: 149px; background: radial-gradient(ellipse 330px 130px at 60px 0, #000 30%, rgba(0,0,0,.55) 65%, transparent 100%), #f3eca0; color: #111; font: 700 25px/28px "Liberation Sans", sans-serif; }
.n1, .n2 { position: absolute; }
.n1 { left: 209px; top: 52px; }
.n2 { left: 23px; top: 138px; }

.menubar { height: 74px; flex: none; display: flex; align-items: center; background: linear-gradient(90deg, #48483b, #43473c 25%, #454739 50%, #484939 68%, #3a3e31 92%, #33372b); font-size: 26px; font-weight: 500; }
.apple { width: 28px; height: 32px; margin-left: 40px; margin-top: -5px; }
.appname { margin-left: 40px; width: 323px; font-weight: 700; }
.menus { display: flex; gap: 41.5px; margin-left: 41.500px; }
.status { margin-left: 715.500px; display: flex; align-items: center; }
.sicon { width: 36px; height: 36px; filter: drop-shadow(0 3px 4px rgba(0,0,0,.25)); }
.pct { width: 59px; margin-left: 36px; font-size: 22px; }
.battery { width: 52px; height: 26px; margin-left: 8px; }
.search { width: 30px; height: 30px; margin-left: 34px; }
.cc { width: 28px; height: 28px; margin-left: 38px; }
.siri { width: 28px; height: 28px; margin-left: 36px; border-radius: 50%; background: radial-gradient(circle at 52% 50%, #fff 0, #d8e8fb 14%, transparent 38%), conic-gradient(#1ea38c, #40a0d0 25%, #3b62c8 45%, #3d2a78 60%, #d9468e 75%, #4c2a55 90%, #1ea38c); }
.date { width: 137px; margin-left: 31px; }
.time { width: 114px; margin-left: 16px; }

.window { height: 2034px; margin-top: 2px; flex: none; border-radius: 22px; overflow: hidden; display: flex; flex-direction: column; background: #2b2a33; box-shadow: 0 0 0 2px #000, 0 4px 34px 16px #000; }
.window::after { content: ""; position: absolute; inset: 0 0 auto 0; height: 225px; border: 2px solid #66656e; border-bottom: 0; border-radius: 22px 22px 0 0; pointer-events: none; }
.tabbar { height: 88px; background: #1c1b22; display: flex; align-items: center; font-size: 22px; font-weight: 400; }
.lights { display: flex; gap: 16px; margin-left: 26px; }
.lights i { width: 24px; height: 24px; border-radius: 50%; }
.lights .r { background: #ed6a5e; } .lights .y { background: #f5bf4f; } .lights .g { background: #62c554; }
.recent { width: 32px; height: 32px; margin-left: 106px; margin-right: 28px; }
.tabs { display: flex; border-left: 2px solid #55545e; padding-left: 4px; height: 88px; align-items: center; }
.tab { width: 408.3px; margin: 0 4px; height: 72px; box-sizing: border-box; padding: 0 24px 0 16px; display: flex; align-items: center; border-radius: 8px; color: #b9b8bf; }
.tab.active { background: #53525e; color: #fbfbfe; box-shadow: 0 0 6px rgba(0,0,0,.6); }
.fav { width: 32px; height: 32px; margin-right: 10px; }
.ttl { flex: 1; min-width: 0; overflow: hidden; line-height: 38px; padding-top: 2px; }
.ttl.fade { mask-image: linear-gradient(90deg, #000 calc(100% - 30px), transparent calc(100% + 6px)); }
.close { width: 16px; height: 16px; margin-left: 9px; }
.plus { width: 24px; height: 24px; margin-left: 27px; }
.chev { width: 24px; height: 14px; margin-left: 57px; }

.toolbar { height: 80px; display: flex; align-items: center; }
.nb { width: 30px; height: 30px; }
.back { margin-left: 33px; } .fwd { margin-left: 41px; } .reload { margin-left: 43px; }
.url { margin-left: 255px; width: 2389px; height: 64px; border-radius: 8px; background: #1c1b22; display: flex; align-items: center; }
.shield { width: 30px; height: 32px; margin-left: 16px; }
.lock { width: 26px; height: 32px; margin-left: 28px; }
.addr { font-size: 28px; margin-left: 24px; flex: 1; padding-top: 2px; }
.star { width: 32px; height: 32px; margin-right: 17px; }
.tools { display: flex; gap: 40.200px; margin-left: 252.500px; }
.tools svg { width: 32px; height: 32px; }

.bookmarks { height: 57px; display: flex; align-items: center; padding-left: 24px; font-size: 22px; font-weight: 400; color: #fbfbfe; }
.mark { display: flex; align-items: center; gap: 8px; overflow: hidden; height: 40px; }
.mark svg { width: 32px; height: 32px; }
.more { width: 28px; height: 24px; margin: 0 26px 0 14px; }

.page { position: relative; height: 1809px; flex: none; display: flex; background: #f9fafc; font-family: Roboto, sans-serif; }
.ic { width: 35.200px; height: 35.200px; fill: none; stroke: currentColor; stroke-width: 2; stroke-linecap: round; stroke-linejoin: round; }
.sidebar { width: 574px; flex: none; background: #fff; border-right: 2px solid #e2e8f0; box-sizing: content-box; padding-top: 17px; height: 1792px; overflow: hidden; color: #334155; }
.row { height: 99px; display: flex; align-items: center; padding-left: 63.800px; gap: 44.600px; font-size: 31px; font-weight: 500; }
.sec { height: 81px; padding: 18px 34.500px 0 36px; display: flex; align-items: center; gap: 26px; color: #64748b; font-size: 26.400px; font-weight: 500; }
.sec hr { flex: 1; height: 2px; background: #e2e8f0; }

.main { flex: 1; padding: 17px 54px 0; }
.head { display: flex; justify-content: space-between; align-items: center; height: 132px; margin-bottom: 58px; }
h1 { height: 80px; line-height: 78px; font-size: 66px; font-weight: 700; color: #111827; }
h1 span, p span, .title span { line-height: 1; }
.head p { height: 52px; line-height: 57px; font-size: 35px; color: #4b5563; }
.create { width: 342px; height: 90px; border-radius: 13px; background: #3b87bc; color: #fff; display: flex; align-items: center; padding-left: 36.500px; gap: 18.500px; box-sizing: border-box; font-size: 31px; font-weight: 500; }
.card { height: 232px; box-sizing: border-box; border: 2px solid #e5e5e5; border-radius: 17px; background: #fff; margin-bottom: 37px; padding: 54px; display: flex; justify-content: space-between; box-shadow: 0 2px 4px rgba(0,0,0,.06); color: #655f5b; }
.title { display: flex; align-items: center; gap: 18px; height: 54px; font-size: 52.800px; font-weight: 600; letter-spacing: -.025em; padding-left: 1px; }
.cal { width: 44px; height: 44px; }
.meta { display: flex; align-items: center; height: 50px; margin-top: 18px; font-size: 31px; }
.when { margin-left: 9px; width: 255px; margin-right: 36px; }
.pill { height: 49px; width: 174px; box-sizing: border-box; border-radius: 25px; display: flex; align-items: center; justify-content: center; font-size: 26.400px; font-weight: 600; border: 2px solid #e5e5e5; }
.team { background: #e89a54; border-color: #e89a54; margin-right: 36px; width: 170px; }
.acts { display: flex; gap: 18px; font-size: 31px; font-weight: 500; padding-top: .5px; }
.btn { height: 81px; width: 94px; box-sizing: border-box; border: 2px solid #f5f5f5; border-radius: 13px; display: flex; align-items: center; justify-content: center; color: #655f5b; }
.btn.view { width: 312px; gap: 27px; }
.btn.del { color: #d0342c; }

.shade { position: absolute; left: 0; right: 0; bottom: 0; height: 110px; background: linear-gradient(transparent, rgba(0,0,0,.035) 50%, rgba(0,0,0,.11)); mask-image: linear-gradient(90deg, transparent, #000 260px, #000 3250px, transparent); }
.toast { position: absolute; left: 2652px; top: 1518px; width: 767px; height: 255px; box-sizing: border-box; background: #fff; border: 2px solid #e5e5e5; border-radius: 13px; padding: 54px; color: #655f5b; box-shadow: 0 22px 33px -7px rgba(0,0,0,.12), 0 9px 13px -9px rgba(0,0,0,.12); overflow: visible; }
.toast strong { display: block; font-size: 31px; font-weight: 600; height: 44px; line-height: 44px; margin-bottom: 10px; }
.toast p { height: 45px; line-height: 45px; font-size: 31px; color: #76706c; }
.tshade { position: absolute; left: 0; right: 0; bottom: 0; height: 50px; border-radius: 0 0 13px 13px; background: linear-gradient(transparent, rgba(0,0,0,.035)); }

.dock { height: 104px; margin: 10px 68px 0 69px; box-sizing: border-box; border: 2px solid rgba(150,150,140,.38); border-radius: 30px; display: flex; align-items: flex-start; padding: 14px 0 0 13px;
  background: linear-gradient(90deg, #1c211d 0, #1b1f1c 850px, #211d19 1300px, #231d19 1700px, #1d231d 2000px, #1c241e 2700px, #2c2520 2880px, #3b2c20 3010px, #5e5838 3180px, #76703f 3319px); }
.dock hr { width: 2px; height: 76px; background: #5f625e; margin: -2px 25px 0 31px; }
.group { display: flex; gap: 19.050px; }
.app { position: relative; width: 66px; height: 84px; }
.app svg { width: 66px; height: 66px; }
.app i { position: absolute; left: 29px; bottom: 0; width: 8px; height: 8px; border-radius: 50%; background: #a6a9a4; }
.badge { position: absolute; right: -9px; top: -9px; width: 32px; height: 32px; border-radius: 16px; background: #e24b3d; color: #fff; font-size: 20px; font-weight: 400; line-height: 32px; text-align: center; }
.badge.wide { width: 47px; font-size: 19px; letter-spacing: -1.200px; }
</style>
